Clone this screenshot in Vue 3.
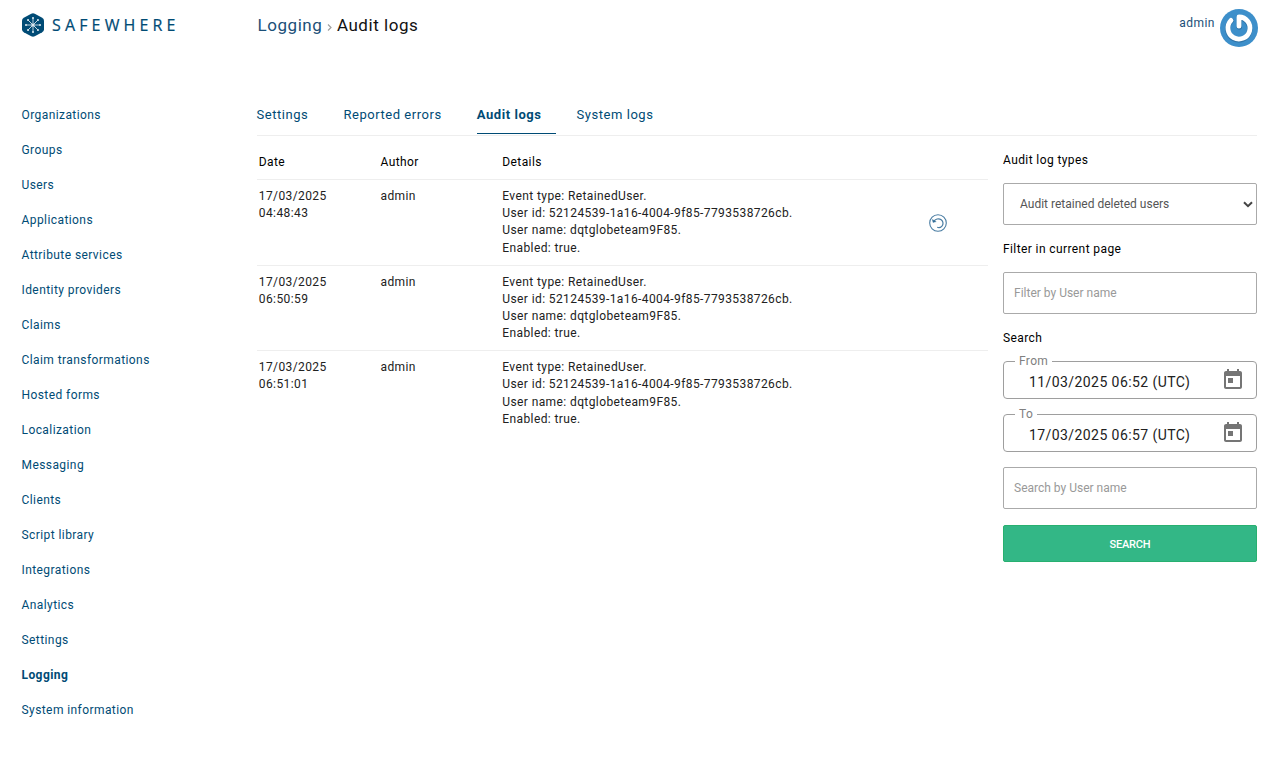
<script setup>
import { ref } from 'vue'

const menu = [
  'Organizations', 'Groups', 'Users', 'Applications', 'Attribute services',
  'Identity providers', 'Claims', 'Claim transformations', 'Hosted forms',
  'Localization', 'Messaging', 'Clients', 'Script library', 'Integrations',
  'Analytics', 'Settings', 'Logging', 'System information'
]
const activeMenu = ref('Logging')

const tabs = ['Settings', 'Reported errors', 'Audit logs', 'System logs']
const activeTab = ref('Audit logs')

const details = [
  'Event type: RetainedUser.',
  'User id: 52124539-1a16-4004-9f85-7793538726cb.',
  'User name: dqtglobeteam9F85.',
  'Enabled: true.'
]
const logs = [
  { date: '17/03/2025', time: '04:48:43', author: 'admin', details, restorable: true },
  { date: '17/03/2025', time: '06:50:59', author: 'admin', details, restorable: false },
  { date: '17/03/2025', time: '06:51:01', author: 'admin', details, restorable: false }
]

const dates = [
  { label: 'From', value: '11/03/2025 06:52 (UTC)' },
  { label: 'To', value: '17/03/2025 06:57 (UTC)' }
]
const logType = ref('Audit retained deleted users')
const filterText = ref('')
const searchText = ref('')
// spokes of the logo snowflake
const spokes = [0, 45, 90, 135, 180, 225, 270, 315]
</script>

<template>
  <div class="page">
    <header class="topbar">
      <a class="logo">
        <svg width="156" height="26" viewBox="0 0 156 26">
          <path d="M9.2 1.7Q11 .8 12.8 1.7L20.2 5.8Q22 6.8 22 8.8V17.2Q22 19.2 20.2 20.2L12.8 24.3Q11 25.2 9.2 24.3L1.8 20.2Q0 19.2 0 17.2V8.8Q0 6.8 1.8 5.8Z" fill="#004b75" />
          <g v-for="angle in spokes" :key="angle" :transform="`rotate(${angle} 11 13)`">
            <path d="M11 13V6.5" stroke="#c9dbe5" stroke-width=".9" />
            <circle cx="11" cy="6" r="1" fill="#e6eff4" />
          </g>
          <circle cx="11" cy="13" r="1.6" fill="#dce8ef" />
          <text x="30" y="19" textLength="123.5" class="logo-text">SAFEWHERE</text>
        </svg>
      </a>
      <h1 class="crumbs">
        <a>Logging</a>
        <svg width="6" height="9" viewBox="0 0 6 9"><path d="M1 1.5L4 4.5L1 7.5" fill="none" stroke="#a0a0a0" stroke-width="1.2" /></svg>
        <span>Audit logs</span>
      </h1>
      <div class="account">
        <span>admin</span>
        <svg width="38" height="38" viewBox="0 0 38 38">
          <circle cx="19" cy="19" r="19" fill="#3d8fca" />
          <g fill="none" stroke-linecap="round" stroke-linejoin="round">
            <path d="M19.3 18V8.8A11 11 0 1 1 11.2 11.8" stroke="#2f74a8" stroke-width="5.4" />
            <path d="M19 17.2V8A11 11 0 1 1 11 11.4" stroke="#fff" stroke-width="4.8" />
          </g>
        </svg>
      </div>
    </header>

    <div class="body">
      <nav class="sidebar">
        <a v-for="item in menu" :key="item" :class="{ active: item === activeMenu }" @click="activeMenu = item">{{ item }}</a>
      </nav>

      <main class="content">
        <div class="tabs">
          <a v-for="tab in tabs" :key="tab" :class="{ active: tab === activeTab }" @click="activeTab = tab">{{ tab }}</a>
        </div>
        <div class="columns">
          <div class="table">
            <div class="row head">
              <div>Date</div>
              <div>Author</div>
              <div>Details</div>
            </div>
            <div v-for="log in logs" :key="log.time" class="row">
              <div>{{ log.date }}<br>{{ log.time }}</div>
              <div>{{ log.author }}</div>
              <div>
                <p v-for="line in log.details" :key="line">{{ line }}</p>
              </div>
              <div class="action">
                <svg v-if="log.restorable" width="18" height="18" viewBox="0 0 18 18" fill="none" stroke="#4a7da3">
                  <circle cx="9" cy="9" r="8.3" stroke-width="1.1" />
                  <path d="M4.8 7.6C6.2 4.9 9.7 4 12.2 5.7C14.4 7.3 14.6 10.5 12.8 12.3C11.6 13.5 9.8 13.9 8.2 13.3" stroke-width="1.2" />
                  <path d="M3.2 5.4L4.1 8.6L7.2 7.6Z" stroke-width=".4" fill="#2f6a95" />
                </svg>
              </div>
            </div>
          </div>

          <aside class="filters">
            <label>Audit log types</label>
            <div class="select">
              <span>{{ logType }}</span>
              <svg width="10" height="7" viewBox="0 0 10 7"><path d="M1 1.2L5 5.2L9 1.2" fill="none" stroke="#444" stroke-width="2" /></svg>
            </div>
            <label>Filter in current page</label>
            <input v-model="filterText" type="text" placeholder="Filter by User name">
            <label class="search-label">Search</label>
            <fieldset v-for="d in dates" :key="d.label" class="date">
              <legend>{{ d.label }}</legend>
              <div class="date-inner">
                <span>{{ d.value }}</span>
                <svg width="24" height="24" viewBox="0 0 24 24" fill="#757575"><path d="M19 3h-1V1h-2v2H8V1H6v2H5c-1.11 0-1.99.9-1.99 2L3 19c0 1.1.89 2 2 2h14c1.1 0 2-.9 2-2V5c0-1.1-.9-2-2-2zm0 16H5V8h14v11zM7 10h5v5H7z" /></svg>
              </div>
            </fieldset>
            <input v-model="searchText" class="search-input" type="text" placeholder="Search by User name">
            <button>SEARCH</button>
          </aside>
        </div>
      </main>
    </div>
  </div>
</template>

<style>
body {
  background: #fff;
}
</style>

<style scoped>
* {
  box-sizing: border-box;
}
.page {
  height: 768px;
  overflow: hidden;
  font-family: Roboto, sans-serif;
  font-size: 12px;
  line-height: 17.143px;
  letter-spacing: 0.4px;
  color: #212121;
}
a {
  color: #004b75;
  cursor: pointer;
}
.topbar {
  display: flex;
  height: 97px;
  padding: 0 25px 0 22px;
}
.logo {
  width: 235.5px;
  padding-top: 12px;
}
.logo svg {
  display: block;
}
.logo-text {
  font-family: "Open Sans", sans-serif;
  font-size: 16px;
  letter-spacing: 0;
  fill: #004b75;
  stroke: #004b75;
  stroke-width: 0.2px;
}
.crumbs {
  display: flex;
  flex: 1;
  margin: 0;
  padding-top: 13px;
  font-size: 17px;
  font-weight: 400;
  line-height: 24px;
  letter-spacing: 0.55px;
  color: #111;
}
.crumbs a {
  color: #1b4f78;
}
.crumbs svg {
  margin: 10px 4px 0 4.5px;
}
.account {
  display: flex;
  padding-top: 9px;
  gap: 5px;
  letter-spacing: 0.5px;
  color: #1b4f78;
}
.account span {
  padding-top: 6px;
}
.body {
  display: flex;
}
.sidebar {
  display: flex;
  flex-direction: column;
  width: 256.5px;
  padding: 1px 0 0 21.5px;
  letter-spacing: 0.42px;
}
.sidebar a {
  height: 35px;
  line-height: 35px;
}
.sidebar .active,
.tabs .active {
  font-weight: 700;
}
.content {
  width: 1000.5px;
}
.tabs {
  display: flex;
  gap: 20px;
  height: 39px;
  border-bottom: 1px solid #eee;
}
.tabs a {
  height: 37px;
  padding-right: 15px;
  font-size: 13px;
  line-height: 35px;
  letter-spacing: 0.55px;
}
.tabs .active {
  margin-right: 0.6px;
  padding-right: 14.4px;
  border-bottom: 1px solid #004b75;
}
.columns {
  display: flex;
  justify-content: space-between;
}
.table {
  width: 731.5px;
}
.row {
  display: grid;
  grid-template-columns: 121.7px 121.8px 390px 1fr;
  padding: 8px 0 8px 2.3px;
  border-bottom: 1px solid #eee;
}
.row:last-child {
  border-bottom: 0;
}
.row p {
  margin: 0;
}
.head {
  height: 44.2px;
  padding-top: 18px;
  color: #000;
}
.action {
  display: flex;
  align-items: center;
  padding: 1px 0 0 36.7px;
}
.filters {
  display: flex;
  flex-direction: column;
  width: 254px;
  padding-top: 16px;
}
label {
  height: 32px;
  color: #000;
}
label:first-child {
  height: 31px;
}
.search-label {
  height: 24px;
}
.select,
input {
  height: 42px;
  margin-bottom: 15px;
  border: 1px solid #aaa;
  border-radius: 2px;
  background: #fff;
}
.select {
  display: flex;
  align-items: center;
  justify-content: space-between;
  margin-bottom: 16px;
  padding: 0 3px 0 16px;
  letter-spacing: 0;
  color: #555;
}
.select span {
  padding-top: 1px;
}
input {
  margin-bottom: 16px;
  padding: 0 10px;
  font-family: Roboto, sans-serif;
  font-size: 12px;
  outline: none;
}
label + input {
  margin-top: -1px;
}
input::placeholder {
  color: #999;
}
.date {
  height: 45px;
  min-width: 0;
  margin: 0 0 8px;
  padding: 0 11px;
  border: 1px solid #9e9e9e;
  border-radius: 4px;
}
legend {
  padding: 0 4px;
  font-size: 12px;
  line-height: 14px;
  letter-spacing: 0.35px;
  color: #808080;
}
.date-inner {
  display: flex;
  justify-content: space-between;
  padding-left: 14px;
  font-size: 14px;
  line-height: 28px;
  letter-spacing: 0.42px;
}
.search-input {
  margin-top: 7px;
}
button {
  height: 37px;
  padding: 2px 0 0;
  border: 1px solid #28b070;
  border-radius: 2px;
  background: #33b786;
  font-family: Roboto, sans-serif;
  font-size: 11px;
  font-weight: 500;
  letter-spacing: -0.2px;
  color: #fff;
}
</style>
